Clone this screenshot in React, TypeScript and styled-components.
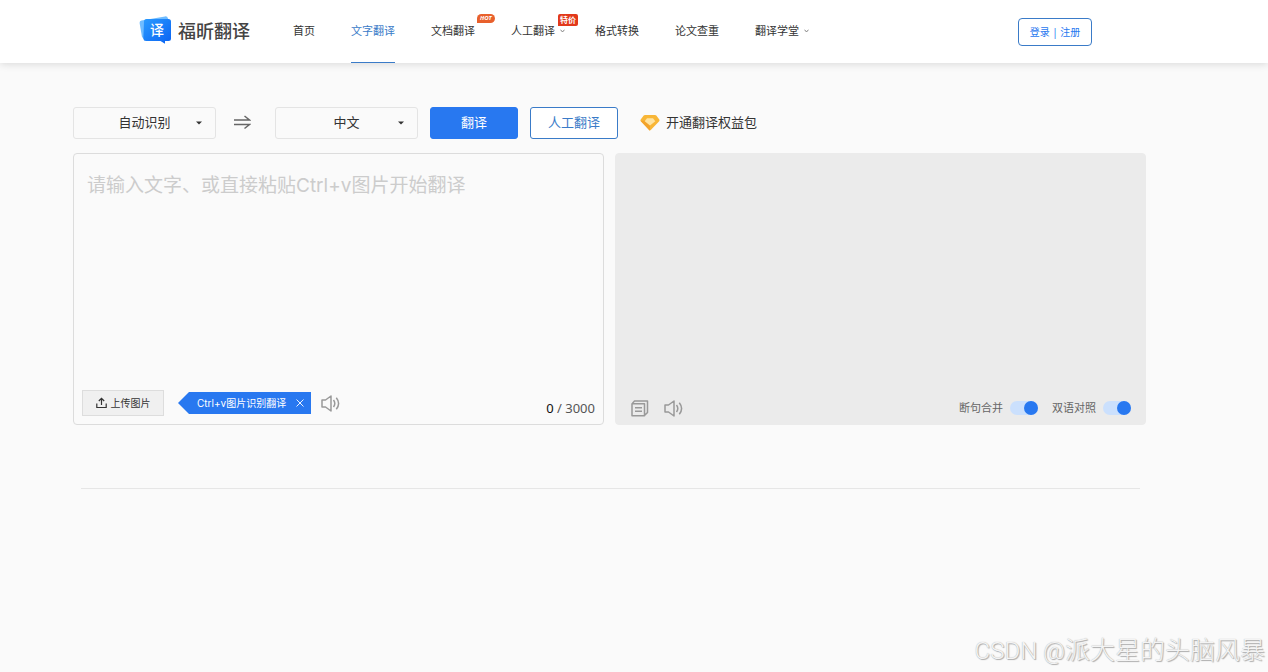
import React, { useState } from 'react';
import styled, { createGlobalStyle, css } from 'styled-components';

const GlobalStyle = createGlobalStyle`
  *, *::before, *::after { box-sizing: border-box; }
  body {
    margin: 0;
    background: #fafafa;
    color: #333;
    font-family: "Noto Sans", "Noto Sans CJK SC", sans-serif;
    font-size: 13px;
    line-height: 20px;
  }
  button, select, textarea, input { font: inherit; margin: 0; }
  a { color: inherit; text-decoration: none; }
`;

const blue = '#2878f0';
const line = '#3a7bc8';
const wideLatin = 'Inter, "Noto Sans CJK SC", sans-serif';

const Page = styled.div`
  position: relative;
  min-height: 100vh;
  display: flex;
  flex-direction: column;
`;

const Header = styled.header`
  display: flex;
  align-items: center;
  height: 63px;
  padding: 0 176px 0 139px;
  background: #fff;
  box-shadow: 0 1px 8px rgba(0, 0, 0, 0.14);
`;

const Brand = styled.a`
  display: flex;
  align-items: center;
  gap: 6px;
  margin-right: 43px;
  padding-bottom: 4px;
  font-size: 18px;
  line-height: 28px;
  font-weight: 500;
  font-family: "Noto Sans CJK SC", sans-serif;
  color: #444;
  white-space: nowrap;
`;

const NavList = styled.ul`
  display: flex;
  flex: 1;
  margin: 0;
  padding: 0;
  list-style: none;
  font-size: 11px;
  white-space: nowrap;
`;

const NavItem = styled.li<{ $menu?: boolean }>`
  position: relative;
  margin-right: ${(p) => (p.$menu ? 30 : 36)}px;
`;

const NavLink = styled.a<{ $active?: boolean }>`
  display: flex;
  align-items: center;
  gap: 5px;
  height: 63px;
  border-bottom: 1px solid ${(p) => (p.$active ? line : 'transparent')};
  color: ${(p) => (p.$active ? line : '#333')};
`;

const Badge = styled.span<{ $hot?: boolean }>`
  position: absolute;
  top: 14px;
  left: 47px;
  padding: 0 2px;
  background: #e2391b;
  border-radius: 2px 2px 2px 0;
  color: #fff;
  font-size: 8px;
  line-height: 12px;
  font-weight: 700;
  ${(p) =>
    p.$hot &&
    css`
      left: 46px;
      padding: 0 3px;
      background: #e8602c;
      border-radius: 5px 5px 5px 0;
      font-size: 6px;
      line-height: 9px;
      font-style: italic;
    `}
`;

const LoginButton = styled.button`
  width: 74px;
  height: 28px;
  padding: 0;
  border: 1px solid ${line};
  border-radius: 4px;
  background: #fff;
  color: ${blue};
  font-size: 10px;
  white-space: nowrap;
`;

const Main = styled.main`
  padding: 44px 122px 0 73px;
`;

const Toolbar = styled.div`
  display: flex;
  align-items: center;
  height: 32px;
  margin-bottom: 14px;
`;

const SelectBox = styled.label`
  display: grid;
  width: 143px;
  height: 32px;
  align-items: center;

  > * { grid-area: 1 / 1; }
  > svg {
    justify-self: end;
    margin-right: 14px;
    pointer-events: none;
  }
`;

const Select = styled.select`
  appearance: none;
  width: 100%;
  height: 32px;
  padding: 0 0 2px;
  border: 1px solid #e4e4e4;
  border-radius: 3px;
  background: #fafafa;
  color: #333;
  text-align: center;
  text-align-last: center;
`;

const IconButton = styled.button`
  display: flex;
  padding: 0;
  border: 0;
  background: none;
  color: #999;
`;

const SwapButton = styled(IconButton)`
  margin: 0 24px 0 18px;
  color: #666;
`;

const ActionButton = styled.button<{ $primary?: boolean }>`
  width: 88px;
  height: 32px;
  margin-left: 12px;
  padding: 0 0 2px;
  border: 1px solid ${(p) => (p.$primary ? blue : line)};
  border-radius: 3px;
  background: ${(p) => (p.$primary ? blue : '#fff')};
  color: ${(p) => (p.$primary ? '#fff' : line)};
`;

const VipLink = styled.a`
  display: flex;
  align-items: center;
  gap: 6px;
  margin-left: 22px;
  padding-bottom: 2px;
`;

const Panels = styled.div`
  display: grid;
  grid-template-columns: 1fr 1fr;
  gap: 11px;
`;

const Panel = styled.section<{ $output?: boolean }>`
  display: flex;
  flex-direction: column;
  min-height: 272px;
  border: 1px solid ${(p) => (p.$output ? '#ebebeb' : '#dcdcdc')};
  border-radius: 4px;
  background: ${(p) => (p.$output ? '#ebebeb' : '#fafafa')};
`;

const SourceText = styled.textarea`
  flex: 1;
  width: 100%;
  padding: 18px 13px 12px;
  border: 0;
  outline: 0;
  resize: none;
  background: transparent;
  color: #333;
  font-family: ${wideLatin};
  font-size: 19px;
  line-height: 28px;

  &::placeholder { color: #ccc; opacity: 1; }
`;

const OutputText = styled.div`
  flex: 1;
`;

const PanelFooter = styled.div`
  display: flex;
  align-items: center;
  height: 40px;
  padding: 0 8px 2px;
  white-space: nowrap;
`;

const OutputFooter = styled(PanelFooter)`
  height: 32px;
  padding: 0 14px 0 15px;
  gap: 15px;
`;

const UploadButton = styled.button`
  display: flex;
  align-items: center;
  justify-content: center;
  gap: 4px;
  width: 82px;
  height: 26px;
  padding: 0;
  border: 1px solid #ddd;
  background: #f0f0f0;
  color: #333;
  font-size: 10px;
`;

const Tip = styled.div`
  display: flex;
  align-items: center;
  justify-content: space-between;
  width: 133px;
  height: 22px;
  margin: 0 10px 0 14px;
  padding: 0 7px 0 19px;
  background: ${blue};
  clip-path: polygon(0 50%, 11px 0, 100% 0, 100% 100%, 11px 100%);
  color: #fff;
  font-family: ${wideLatin};
  font-size: 10px;
`;

const TipClose = styled(IconButton)`
  color: #fff;
`;

const Counter = styled.span`
  align-self: flex-end;
  margin-left: auto;
  padding-bottom: 4px;
  color: #555;

  b { font-weight: 400; color: #111; }
`;

const Switches = styled.div`
  display: flex;
  gap: 14px;
  margin-left: auto;
`;

const SwitchLabel = styled.label`
  display: flex;
  align-items: center;
  gap: 7px;
  font-size: 11px;
  color: #666;
`;

const Switch = styled.input`
  appearance: none;
  display: flex;
  width: 28px;
  height: 14px;
  border-radius: 7px;
  background: #ccc;

  &::before {
    content: '';
    width: 14px;
    height: 14px;
    border-radius: 50%;
    background: #fff;
  }
  &:checked { background: #cbe0fd; }
  &:checked::before { margin-left: auto; background: ${blue}; }
`;

const Divider = styled.hr`
  margin: 63px 6px 0 8px;
  border: 0;
  border-top: 1px solid #e6e6e6;
`;

const Watermark = styled.div`
  position: absolute;
  right: 3px;
  bottom: 3px;
  color: #f4f4f4;
  font-size: 25px;
  line-height: 36px;
  font-weight: 300;
  font-family: "Noto Sans CJK SC", sans-serif;
  text-shadow: 1px 1px 1px #aaa, 0 0 1px #aaa;
  white-space: nowrap;
`;

const WatermarkSite = styled.span`
  font-family: Roboto, sans-serif;
  font-size: 24px;
`;

const LogoIcon = () => (
  <svg width="33" height="28" viewBox="0 0 33 28" aria-hidden="true">
    <defs>
      <linearGradient id="logoFill" x1="0" y1="0" x2="1" y2="1">
        <stop offset="0" stopColor="#2a9bff" />
        <stop offset="1" stopColor="#0a62f2" />
      </linearGradient>
    </defs>
    <path d="M2.500 4.500 26 .4q2.500-.3 3 2.200L31 20 5.500 23.500 3 21 .6 7q-.2-2.100 1.900-2.500Z" fill="#6fbcff" />
    <path d="M7.500 3h22q2.500 0 2.500 2.500v17q0 2.500-2.500 2.500H26v2.800L21.500 25H7q-2.500 0-2.700-2.500L5 5.500Q5 3 7.500 3Z" fill="url(#logoFill)" />
    <text x="18" y="19" fill="#fff" fontSize="14" textAnchor="middle" fontFamily="Noto Sans CJK SC, sans-serif">译</text>
  </svg>
);

const Chevron = () => (
  <svg width="5" height="4" viewBox="0 0 5 4" fill="none" stroke="#777" strokeWidth="0.9" aria-hidden="true">
    <path d="M.5.7 2.500 3 4.500.7" />
  </svg>
);

const Caret = () => (
  <svg width="6" height="4" viewBox="0 0 6 4" aria-hidden="true">
    <path d="M0 .5h6L3 3.500Z" fill="#333" />
  </svg>
);

const SwapIcon = () => (
  <svg width="17" height="16" viewBox="0 0 17 16" fill="none" stroke="currentColor" strokeWidth="1.500" aria-hidden="true">
    <path d="M0 5h15.500L10.500 1M0 9.500h15.500L10.500 13.500" />
  </svg>
);

const GemIcon = () => (
  <svg width="20" height="17" viewBox="0 0 20 17" aria-hidden="true">
    <path d="M5 1h10q.8 0 1.300.6l3 4q.6.8-.1 1.600l-8.200 8.600q-1 1-2 0L.8 7.200Q.1 6.400.7 5.600l3-4Q4.200 1 5 1Z" fill="#f8b637" />
    <path d="M.5 6.700h5L10 11.500V16.400q-.6 0-1-.5Z" fill="#f3a32a" />
    <path d="M7 4.300h6l2.300 2.900L10 11.500 4.700 7.200Z" fill="#ffe3a0" />
  </svg>
);

const UploadIcon = () => (
  <svg width="11" height="12" viewBox="0 0 11 12" fill="none" stroke="currentColor" strokeWidth="1.200" aria-hidden="true">
    <path d="M5.500 8V1.500M2.800 4 5.500 1.300 8.200 4M.8 6.500v4h9.400v-4" />
  </svg>
);

const CloseIcon = () => (
  <svg width="8" height="8" viewBox="0 0 8 8" stroke="currentColor" strokeWidth="0.900" aria-hidden="true">
    <path d="m.5.5 7 7M7.500.5l-7 7" />
  </svg>
);

const SpeakerIcon = () => (
  <svg width="19" height="17" viewBox="0 0 19 17" fill="none" stroke="currentColor" strokeWidth="1.500" aria-hidden="true">
    <path d="M1 5h3.500L10 1v15l-5.500-4H1Z" strokeLinejoin="round" />
    <path d="M12.500 5q2.600 3.500 0 7M15.300 2.800q4.600 5.700 0 11.400" />
  </svg>
);

const CopyIcon = () => (
  <svg width="18" height="17" viewBox="0 0 18 17" fill="none" stroke="currentColor" strokeWidth="1.500" strokeLinejoin="round" aria-hidden="true">
    <path d="M1 3.700h12.500v12H1ZM1.500 3.200 3.500 1h13v11.500l-2.500 2.500M4 7.700h7M4 11.200h7" />
  </svg>
);

type NavEntry = { label: string; active?: boolean; menu?: boolean; badge?: string; hot?: boolean };

const navEntries: NavEntry[] = [
  { label: '首页' },
  { label: '文字翻译', active: true },
  { label: '文档翻译', badge: 'HOT', hot: true },
  { label: '人工翻译', menu: true, badge: '特价' },
  { label: '格式转换' },
  { label: '论文查重' },
  { label: '翻译学堂', menu: true },
];

function LanguageSelect({ label, options }: { label: string; options: string[] }) {
  return (
    <SelectBox>
      <Select aria-label={label}>
        {options.map((o) => (
          <option key={o}>{o}</option>
        ))}
      </Select>
      <Caret />
    </SelectBox>
  );
}

export default function App() {
  const [text, setText] = useState('');

  return (
    <Page lang="zh-CN">
      <GlobalStyle />
      <Header>
        <Brand href="#">
          <LogoIcon />
          福昕翻译
        </Brand>
        <NavList>
          {navEntries.map((n) => (
            <NavItem key={n.label} $menu={n.menu}>
              <NavLink href="#" $active={n.active}>
                {n.label}
                {n.menu && <Chevron />}
              </NavLink>
              {n.badge && <Badge $hot={n.hot}>{n.badge}</Badge>}
            </NavItem>
          ))}
        </NavList>
        <LoginButton type="button">登录 | 注册</LoginButton>
      </Header>

      <Main>
        <Toolbar>
          <LanguageSelect label="源语言" options={['自动识别', '中文', '英语']} />
          <SwapButton type="button" aria-label="交换语言">
            <SwapIcon />
          </SwapButton>
          <LanguageSelect label="目标语言" options={['中文', '英语']} />
          <ActionButton type="button" $primary>翻译</ActionButton>
          <ActionButton type="button">人工翻译</ActionButton>
          <VipLink href="#">
            <GemIcon />
            开通翻译权益包
          </VipLink>
        </Toolbar>

        <Panels>
          <Panel>
            <SourceText
              aria-label="原文"
              maxLength={3000}
              placeholder="请输入文字、或直接粘贴Ctrl+v图片开始翻译"
              value={text}
              onChange={(e) => setText(e.target.value)}
            />
            <PanelFooter>
              <UploadButton type="button">
                <UploadIcon />
                上传图片
              </UploadButton>
              <Tip>
                Ctrl+v图片识别翻译
                <TipClose type="button" aria-label="关闭">
                  <CloseIcon />
                </TipClose>
              </Tip>
              <IconButton type="button" aria-label="朗读原文">
                <SpeakerIcon />
              </IconButton>
              <Counter>
                <b>{text.length}</b> / 3000
              </Counter>
            </PanelFooter>
          </Panel>

          <Panel $output>
            <OutputText />
            <OutputFooter>
              <IconButton type="button" aria-label="复制译文">
                <CopyIcon />
              </IconButton>
              <IconButton type="button" aria-label="朗读译文">
                <SpeakerIcon />
              </IconButton>
              <Switches>
                <SwitchLabel>
                  断句合并
                  <Switch type="checkbox" defaultChecked />
                </SwitchLabel>
                <SwitchLabel>
                  双语对照
                  <Switch type="checkbox" defaultChecked />
                </SwitchLabel>
              </Switches>
            </OutputFooter>
          </Panel>
        </Panels>

        <Divider />
      </Main>

      <Watermark>
        <WatermarkSite>CSDN @</WatermarkSite>
        派大星的头脑风暴
      </Watermark>
    </Page>
  );
}
